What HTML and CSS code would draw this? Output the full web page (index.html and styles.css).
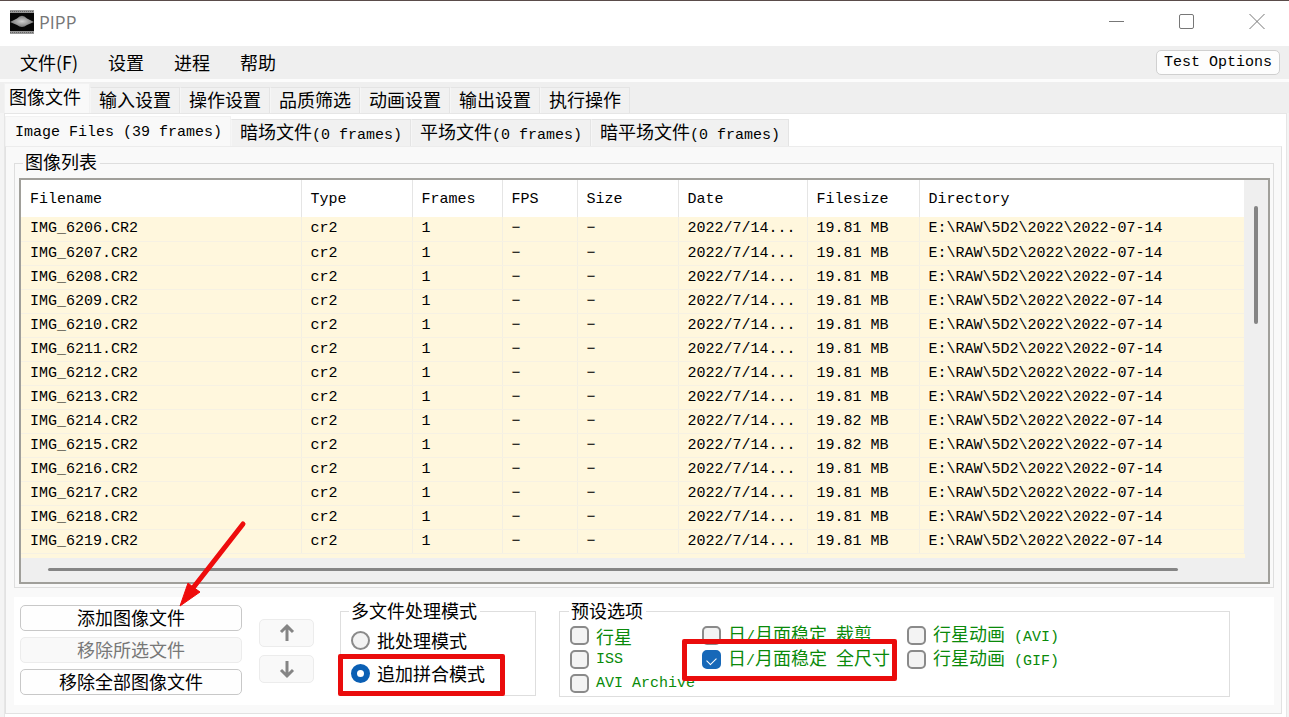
FILE: index.html
```html
<!DOCTYPE html>
<html lang="zh-CN">
<head>
<meta charset="utf-8">
<title>PIPP</title>
<link rel="stylesheet" href="styles.css">
</head>
<body>
<div class="window">
  <header class="titlebar">
    <svg class="logo" viewBox="0 0 24 24" aria-hidden="true">
      <defs><radialGradient id="planet"><stop offset="0" stop-color="#d0d0d0"/><stop offset="1" stop-color="#777"/></radialGradient></defs>
      <rect width="24" height="24" fill="#080808"/>
      <path d="M0 1.5h24M0 22.5h24" stroke="#999" stroke-width="3"/>
      <path d="M0 1.5h24M0 22.5h24" stroke="#666" stroke-width="1" stroke-dasharray="1 1"/>
      <path d="M0 12L7 8.5Q12 3 17 8.5L24 12L17 15Q12 19 7 15Z" fill="url(#planet)"/>
    </svg>
    <span class="title">PIPP</span>
    <div class="controls">
      <button type="button" aria-label="最小化"><svg viewBox="0 0 16 16"><path d="M0 7.5h15"/></svg></button>
      <button type="button" aria-label="最大化"><svg viewBox="0 0 16 16"><rect x=".5" y=".5" width="14" height="14" rx="1.5"/></svg></button>
      <button type="button" aria-label="关闭"><svg viewBox="0 0 16 16"><path d="M.5 0l15 15M15.5 0l-15 15"/></svg></button>
    </div>
  </header>
  <nav class="menubar">
    <button type="button">文件(F)</button>
    <button type="button">设置</button>
    <button type="button">进程</button>
    <button type="button">帮助</button>
    <button type="button" class="test mono">Test Options</button>
  </nav>
  <div class="tabs main-tabs" role="tablist">
    <button type="button" role="tab" aria-selected="true">图像文件</button>
    <button type="button" role="tab">输入设置</button>
    <button type="button" role="tab">操作设置</button>
    <button type="button" role="tab">品质筛选</button>
    <button type="button" role="tab">动画设置</button>
    <button type="button" role="tab">输出设置</button>
    <button type="button" role="tab">执行操作</button>
  </div>
  <main class="page">
    <div class="tabs file-tabs" role="tablist">
      <button type="button" role="tab" aria-selected="true"><span class="mono">Image Files (39 frames)</span></button>
      <button type="button" role="tab">暗场文件<span class="mono">(0 frames)</span></button>
      <button type="button" role="tab">平场文件<span class="mono">(0 frames)</span></button>
      <button type="button" role="tab">暗平场文件<span class="mono">(0 frames)</span></button>
    </div>
    <section class="panel">
      <fieldset class="files">
        <legend>图像列表</legend>
        <div class="list">
          <div class="list-body">
            <table class="mono">
              <colgroup><col class="c-name"><col class="c-type"><col class="c-frames"><col class="c-fps"><col class="c-size"><col class="c-date"><col class="c-filesize"><col></colgroup>
              <thead><tr><th>Filename</th><th>Type</th><th>Frames</th><th>FPS</th><th>Size</th><th>Date</th><th>Filesize</th><th>Directory</th></tr></thead>
              <tbody>
                <tr><td>IMG_6206.CR2</td><td>cr2</td><td>1</td><td>−</td><td>−</td><td>2022/7/14...</td><td>19.81 MB</td><td>E:\RAW\5D2\2022\2022-07-14</td></tr>
                <tr><td>IMG_6207.CR2</td><td>cr2</td><td>1</td><td>−</td><td>−</td><td>2022/7/14...</td><td>19.81 MB</td><td>E:\RAW\5D2\2022\2022-07-14</td></tr>
                <tr><td>IMG_6208.CR2</td><td>cr2</td><td>1</td><td>−</td><td>−</td><td>2022/7/14...</td><td>19.81 MB</td><td>E:\RAW\5D2\2022\2022-07-14</td></tr>
                <tr><td>IMG_6209.CR2</td><td>cr2</td><td>1</td><td>−</td><td>−</td><td>2022/7/14...</td><td>19.81 MB</td><td>E:\RAW\5D2\2022\2022-07-14</td></tr>
                <tr><td>IMG_6210.CR2</td><td>cr2</td><td>1</td><td>−</td><td>−</td><td>2022/7/14...</td><td>19.81 MB</td><td>E:\RAW\5D2\2022\2022-07-14</td></tr>
                <tr><td>IMG_6211.CR2</td><td>cr2</td><td>1</td><td>−</td><td>−</td><td>2022/7/14...</td><td>19.81 MB</td><td>E:\RAW\5D2\2022\2022-07-14</td></tr>
                <tr><td>IMG_6212.CR2</td><td>cr2</td><td>1</td><td>−</td><td>−</td><td>2022/7/14...</td><td>19.81 MB</td><td>E:\RAW\5D2\2022\2022-07-14</td></tr>
                <tr><td>IMG_6213.CR2</td><td>cr2</td><td>1</td><td>−</td><td>−</td><td>2022/7/14...</td><td>19.81 MB</td><td>E:\RAW\5D2\2022\2022-07-14</td></tr>
                <tr><td>IMG_6214.CR2</td><td>cr2</td><td>1</td><td>−</td><td>−</td><td>2022/7/14...</td><td>19.82 MB</td><td>E:\RAW\5D2\2022\2022-07-14</td></tr>
                <tr><td>IMG_6215.CR2</td><td>cr2</td><td>1</td><td>−</td><td>−</td><td>2022/7/14...</td><td>19.82 MB</td><td>E:\RAW\5D2\2022\2022-07-14</td></tr>
                <tr><td>IMG_6216.CR2</td><td>cr2</td><td>1</td><td>−</td><td>−</td><td>2022/7/14...</td><td>19.81 MB</td><td>E:\RAW\5D2\2022\2022-07-14</td></tr>
                <tr><td>IMG_6217.CR2</td><td>cr2</td><td>1</td><td>−</td><td>−</td><td>2022/7/14...</td><td>19.81 MB</td><td>E:\RAW\5D2\2022\2022-07-14</td></tr>
                <tr><td>IMG_6218.CR2</td><td>cr2</td><td>1</td><td>−</td><td>−</td><td>2022/7/14...</td><td>19.81 MB</td><td>E:\RAW\5D2\2022\2022-07-14</td></tr>
                <tr><td>IMG_6219.CR2</td><td>cr2</td><td>1</td><td>−</td><td>−</td><td>2022/7/14...</td><td>19.81 MB</td><td>E:\RAW\5D2\2022\2022-07-14</td></tr>
              </tbody>
            </table>
            <div class="vscroll"><div class="vthumb"></div></div>
          </div>
          <div class="hscroll"><div class="hthumb"></div></div>
        </div>
      </fieldset>
      <div class="bottom">
        <div class="actions">
          <button type="button">添加图像文件</button>
          <button type="button" disabled>移除所选文件</button>
          <button type="button">移除全部图像文件</button>
          <svg class="pointer" viewBox="0 0 68 90" aria-hidden="true">
            <path d="M64 6L14 70" stroke="#ee0c0c" stroke-width="5" stroke-linecap="round"/>
            <path d="M1 88L9 65L14 69L21 74Z" fill="#ee0c0c" stroke="#ee0c0c"/>
          </svg>
        </div>
        <div class="movers">
          <button type="button" aria-label="上移" disabled><svg viewBox="0 0 16 20"><path d="M8 18V3M2 9l6-6 6 6"/></svg></button>
          <button type="button" aria-label="下移" disabled><svg viewBox="0 0 16 20"><path d="M8 2v15M2 11l6 6 6-6"/></svg></button>
        </div>
        <fieldset class="mode">
          <legend>多文件处理模式</legend>
          <label><input type="radio" name="mode">批处理模式</label>
          <label class="marked"><input type="radio" name="mode" checked>追加拼合模式</label>
        </fieldset>
        <fieldset class="presets">
          <legend>预设选项</legend>
          <div class="preset-grid">
            <label><input type="checkbox"><span>行星</span></label>
            <label><input type="checkbox"><span>日<span class="mono">/</span>月面稳定<span class="mono"> </span>裁剪</span></label>
            <label><input type="checkbox"><span>行星动画<span class="mono"> (AVI)</span></span></label>
            <label><input type="checkbox"><span class="mono">ISS</span></label>
            <label class="marked"><input type="checkbox" checked><span>日<span class="mono">/</span>月面稳定<span class="mono"> </span>全尺寸</span></label>
            <label><input type="checkbox"><span>行星动画<span class="mono"> (GIF)</span></span></label>
            <label><input type="checkbox"><span class="mono">AVI Archive</span></label>
          </div>
        </fieldset>
      </div>
    </section>
  </main>
</div>
</body>
</html>
```
FILE: styles.css
```css
* { box-sizing: border-box; }
body {
  margin: 0;
  background: #6b5f5c;
  color: #000;
  font: 18px/24px "Noto Sans CJK SC", sans-serif;
}
button {
  font: inherit;
  color: inherit;
  padding: 0;
  border: 0;
  background: none;
  white-space: nowrap;
}
.mono { font-family: "Liberation Mono", "Noto Sans CJK SC", monospace; font-size: 15px; }
.window {
  display: flex;
  flex-direction: column;
  min-height: 100vh;
  border-top: 1px solid #5a4c4a;
  background: #f4f4f4;
}

.titlebar {
  display: flex;
  align-items: center;
  height: 45px;
  padding: 0 24px 3px 10px;
  background: #fff;
}
.logo { width: 24px; height: 24px; }
.title { margin-left: 5px; font-family: "Open Sans", sans-serif; color: #777; }
.controls { display: flex; gap: 54px; margin-left: auto; }
.controls button { display: flex; }
.controls svg { width: 16px; height: 16px; fill: none; stroke: #777; overflow: visible; }

.menubar {
  display: flex;
  align-items: center;
  gap: 30px;
  height: 36px;
  padding: 0 9px 1px 20px;
  background: #efefef;
  border-bottom: 3px solid #fcfcfc;
}
.menubar .test {
  margin-left: auto;
  height: 25px;
  padding: 0 7px;
  border: 1px solid #d0d0d0;
  border-radius: 5px;
  background: #fdfdfd;
}

.tabs { display: flex; align-items: flex-end; }
.tabs button {
  height: 26px;
  padding: 0 8px 3px;
  line-height: 22px;
  border: 1px solid #e4e4e4;
  border-bottom: 0;
  background: #f1f1f1;
}
.tabs button + button { border-left-color: #f6f6f6; }
.tabs [aria-selected="true"] { background: #f9f9f9; border-color: #f2f2f2; }
.main-tabs { height: 31px; padding-left: 4px; background: #efefef; }
.main-tabs button { width: 90px; }
.main-tabs [aria-selected="true"] { width: 86px; height: 30px; padding: 0 4px 5px; text-align: left; }
.page {
  flex: 1;
  display: flex;
  flex-direction: column;
  margin: 0 2px 0 4px;
  border: 1px solid #e6e6e6;
  border-bottom: 0;
  background: #fff;
  padding: 2px 4px 4px 0;
}
.file-tabs { height: 30px; }
.file-tabs button { height: 27px; }
.file-tabs [aria-selected="true"] { height: 30px; padding: 0 8px 5px 9px; }

.panel {
  flex: 1;
  border: 1px solid #e2e2e2;
  border-top-color: #ececec;
  background: #f9f9f9;
  padding: 4px 7px 8px 8px;
}
fieldset { min-width: 0; margin: 0; padding: 0; border: 1px solid #dedede; }
legend { padding: 0 3px 3px 2px; line-height: 21px; }
.files { padding: 0 3px 3px 4px; }
.files legend { margin-left: 4px; }
.list { border: 2px solid #a09f9a; margin-top: 3px; background: #efefef; }
.list-body { display: flex; border-bottom: 4px solid; border-image: linear-gradient(to right, #fff7dd calc(100% - 24px), #efefef calc(100% - 24px)) 1; border-width: 0 0 4px; }
.list table { flex: 1; width: 0; table-layout: fixed; border-collapse: collapse; background: #fff7dd; }
.c-name { width: 280px; }
.c-type { width: 111px; }
.c-frames { width: 90px; }
.c-fps { width: 75px; }
.c-size { width: 101px; }
.c-date { width: 129px; }
.c-filesize { width: 112px; }
th, td { padding: 0 0 0 9px; text-align: left; font-weight: 400; white-space: nowrap; overflow: hidden; }
th { height: 37px; padding-top: 2px; background: #fff; border-right: 1px solid #e5e5e5; }
td { height: 24px; line-height: 23px; border-right: 1px solid #f3efe2; border-bottom: 1px solid #f6f1e3; }
th:last-child, td:last-child { border-right: 0; }
.vscroll { flex: 0 0 24px; padding: 26px 10px 0; }
.vthumb { width: 4px; height: 118px; border-radius: 2px; background: #858585; }
.hscroll { height: 24px; padding: 10px 90px 0 27px; }
.hthumb { height: 3px; border-radius: 2px; background: #858585; }

.bottom {
  display: flex;
  align-items: flex-start;
  margin-top: 9px;
  padding: 3px 44px 8px 6px;
  background: #fff;
}
.actions { position: relative; display: grid; gap: 6px; width: 222px; margin-top: 5px; }
.actions button { height: 26px; padding-bottom: 2px; line-height: 22px; border: 1px solid #c8c8c8; border-radius: 5px; background: #fefefe; }
.actions button:disabled { color: #777; border-color: #ececec; background: #f9f9f9; }
.pointer { position: absolute; width: 68px; height: 90px; right: -5px; top: -87px; fill: none; }
.movers { display: grid; gap: 8px; width: 55px; margin: 19px 26px 0 17px; }
.movers button { display: grid; place-items: center; height: 28px; border: 1px solid #ececec; border-radius: 5px; background: #f9f9f9; }
.movers svg { width: 16px; height: 20px; fill: none; stroke: #858585; stroke-width: 3; }
.mode { width: 196px; padding: 0 10px 5px; }
.bottom label { position: relative; display: flex; align-items: center; white-space: nowrap; }
.mode label { height: 33px; gap: 7px; }
.mode legend { margin-left: -2px; }
input {
  appearance: none;
  flex: none;
  display: grid;
  place-items: center;
  width: 19px;
  height: 19px;
  margin: 0;
  border: 2px solid #8a8a8a;
  border-radius: 5px;
  background: #f3f3f3;
}
input[type="radio"] { border-radius: 50%; }
input[type="radio"]:checked { border: 6px solid #0a5fb4; background: #fff; }
input[type="checkbox"]:checked { border-color: #1768b8; background: #1768b8; }
input[type="checkbox"]:checked::after {
  content: "";
  width: 8px;
  height: 5px;
  border: solid #fff;
  border-width: 0 0 1px 1px;
  transform: rotate(-45deg);
}
.bottom .marked { z-index: 1; }
.marked::after {
  content: "";
  position: absolute;
  inset: -3px 20px -6px -13px;
  border: 5px solid #ea0c0c;
  border-radius: 2px;
}
.presets { flex: 1; margin-left: 23px; }
.presets legend { margin-left: 9px; }
.preset-grid { display: grid; grid-template-columns: 132px 205px 1fr; grid-auto-rows: 24px; padding-left: 10px; line-height: 22px; color: #0a8a0a; }
.preset-grid label { gap: 7px; }
.preset-grid .marked::after { inset: -9px 10px -9px -20px; }
```
